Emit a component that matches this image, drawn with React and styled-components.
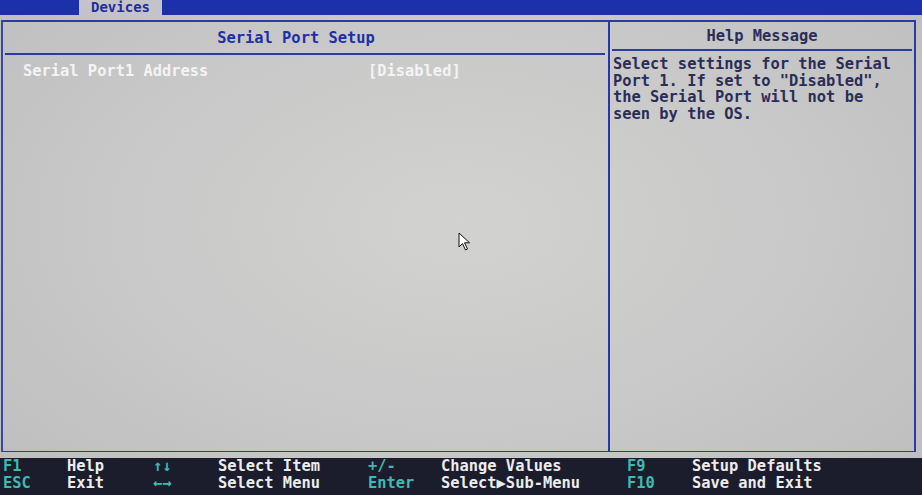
import React from "react";
import styled, { createGlobalStyle } from "styled-components";

const GlobalStyle = createGlobalStyle`
  html, body {
    margin: 0;
    padding: 0;
    background: #c6c6c6;
  }
  body {
    font-family: "DejaVu Sans Mono", "Liberation Mono", monospace;
    font-size: 15.4px;
    font-weight: bold;
  }
`;

const Screen = styled.div`
  position: relative;
  width: 922px;
  height: 495px;
  overflow: hidden;
  display: flex;
  flex-direction: column;
  background: radial-gradient(ellipse at 50% 45%, #d2d2d0 0%, #c8c8c8 55%, #bdbdbf 100%);
`;

const TopBar = styled.div`
  height: 15px;
  flex: none;
  background: #1c30ac;
  display: flex;
  align-items: flex-start;
`;

const Tab = styled.div`
  margin-left: 79px;
  width: 83px;
  height: 15px;
  background: #c3c3c9;
  color: #1e2c9c;
  font-size: 14px;
  line-height: 15px;
  text-align: center;
`;

const Main = styled.div`
  flex: 1;
  padding: 5px 6px 0 1px;
  display: flex;
  flex-direction: column;
`;

const Frame = styled.div`
  flex: 1;
  border: 2px solid #2b3aa6;
  border-bottom-width: 1px;
  border-left-color: #3a46a8;
  display: grid;
  grid-template-columns: 607px 1fr;
  margin-bottom: 6px;
`;

const Column = styled.div`
  display: flex;
  flex-direction: column;
  border-right: ${(p) => (p.$divider ? "2px solid #2436b0" : "none")};
`;

const Header = styled.div`
  height: ${(p) => p.$h}px;
  margin: ${(p) => p.$margin};
  border-bottom: 2px solid #2d3b9e;
  display: flex;
  align-items: center;
  justify-content: center;
  padding-right: ${(p) => p.$shift || 0}px;
  color: ${(p) => p.$color};
`;

const ItemRow = styled.div`
  margin-top: 8px;
  padding-left: 20px;
  display: grid;
  grid-template-columns: 345px auto;
  line-height: 17px;
  color: #f4f4f4;
`;

const HelpText = styled.div`
  padding: 5px 0 0 3px;
  max-width: 31ch;
  line-height: 16.6px;
  color: #2a2d58;
`;

const Footer = styled.div`
  height: 37px;
  flex: none;
  background: #1b1d2c;
  display: grid;
  grid-template-columns: 64px 86px 65px 150px 73px 186px 65px 1fr;
  grid-auto-rows: 17px;
  padding-left: 3px;
  line-height: 17px;
  white-space: pre;
`;

const Key = styled.span`
  color: #3fb9b2;
`;

const Label = styled.span`
  color: #ececec;
`;

const Cursor = styled.svg`
  position: absolute;
  left: 458px;
  top: 232px;
`;

const keys = [
  ["F1", "Help", "\u2191\u2193", "Select Item", "+/-", "Change Values", "F9", "Setup Defaults"],
  ["ESC", "Exit", "\u2190\u2192", "Select Menu", "Enter", "Select\u25B6Sub-Menu", "F10", "Save and Exit"],
];

export default function App() {
  return (
    <>
      <GlobalStyle />
      <Screen>
        <TopBar>
          <Tab>Devices</Tab>
        </TopBar>
        <Main>
          <Frame>
            <Column $divider>
              <Header $h={31} $margin="0 3px 0 2px" $shift={18} $color="#1f2fa6">
                Serial Port Setup
              </Header>
              <ItemRow>
                <span>Serial Port1 Address</span>
                <span>[Disabled]</span>
              </ItemRow>
            </Column>
            <Column>
              <Header $h={27} $margin="0 2px 0 2px" $color="#2c2f58">
                Help Message
              </Header>
              <HelpText>
                Select settings for the Serial Port 1. If set to "Disabled", the Serial Port will not be seen by the OS.
              </HelpText>
            </Column>
          </Frame>
        </Main>
        <Footer>
          {keys.map((row) =>
            row.map((t, i) =>
              i % 2 === 0 ? <Key key={row[0] + i}>{t}</Key> : <Label key={row[0] + i}>{t}</Label>
            )
          )}
        </Footer>
        <Cursor width="14" height="20" viewBox="0 0 14 20">
          <path d="M1 1 L1 15 L4.5 11.5 L7.5 18 L9.5 17 L6.5 10.8 L11.5 10.8 Z" fill="#fff" stroke="#111" strokeWidth="1" />
        </Cursor>
      </Screen>
    </>
  );
}
